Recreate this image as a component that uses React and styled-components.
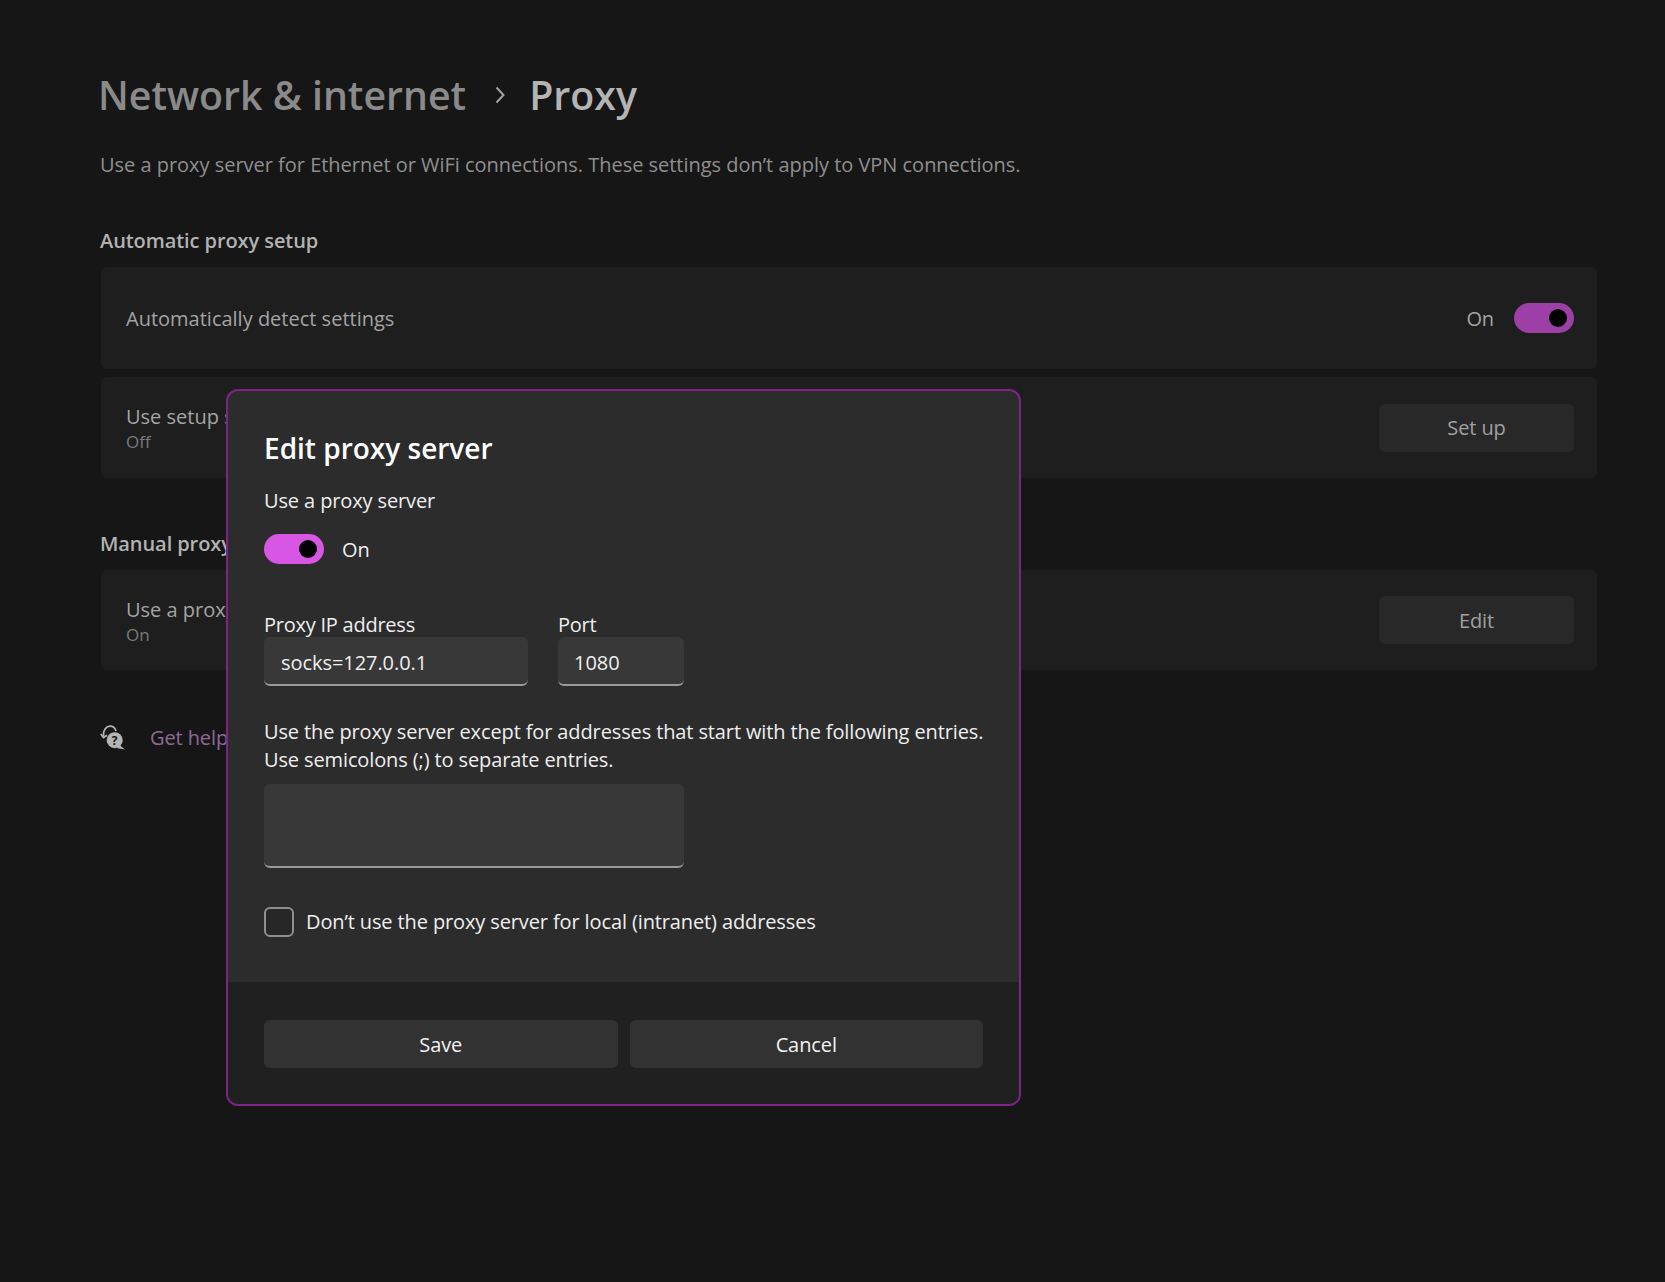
import React from "react";
import styled, { createGlobalStyle } from "styled-components";

const Global = createGlobalStyle`
  html, body { margin: 0; padding: 0; background: #161616; }
  body { font-family: "Open Sans", "Noto Sans", sans-serif; }
  * { box-sizing: border-box; }
`;

const Page = styled.div`
  position: relative;
  width: 1665px;
  height: 1282px;
  overflow: hidden;
  background: #161616;
  padding: 67px 68px 0 100px;
`;

const Breadcrumb = styled.div`
  display: flex;
  align-items: center;
  height: 56px;
  margin-left: -2px;
  font-size: 39.3px;
  font-weight: 600;
`;

const Crumb = styled.span`
  color: ${(p) => (p.$current ? "#b4b4b4" : "#8a8a8a")};
`;

const Sep = styled.svg`
  width: 14px;
  height: 20px;
  margin: 0 22px 0 27px;
  color: #a3a3a3;
`;

const Subtitle = styled.p`
  margin: 28px 0 0;
  font-size: 20px;
  line-height: 28px;
  letter-spacing: -0.02px;
  color: #8f8f8f;
`;

const SectionTitle = styled.h2`
  margin: ${(p) => p.$top}px 0 ${(p) => p.$bottom}px;
  font-size: 20px;
  line-height: 28px;
  font-weight: 600;
  letter-spacing: -0.08px;
  color: #b2b2b2;
`;

const Cards = styled.div`
  display: flex;
  flex-direction: column;
  gap: 8px;
  margin-left: 1px;
`;

const Card = styled.div`
  display: flex;
  align-items: center;
  justify-content: space-between;
  height: ${(p) => p.$h}px;
  padding: 0 23px 0 25px;
  background: #1e1e1e;
  border-radius: 6px;
`;

const CardText = styled.div`
  display: flex;
  flex-direction: column;
  padding-top: 2px;
`;

const CardTitle = styled.div`
  font-size: 20px;
  line-height: 26px;
  color: #a4a4a4;
`;

const CardSub = styled.div`
  font-size: 17px;
  line-height: 23px;
  color: #7a7a7a;
`;

const ToggleRow = styled.div`
  display: flex;
  align-items: center;
  gap: 20px;
`;

const OnLabel = styled.span`
  font-size: 20px;
  letter-spacing: -0.1px;
  color: ${(p) => p.$color};
`;

const Toggle = styled.div`
  display: flex;
  align-items: center;
  justify-content: flex-end;
  width: 60px;
  height: 30px;
  padding-right: 7px;
  border-radius: 15px;
  background: ${(p) => p.$color};
`;

const Knob = styled.div`
  width: 18px;
  height: 18px;
  border-radius: 50%;
  background: #000;
`;

const CardButton = styled.div`
  display: flex;
  align-items: center;
  justify-content: center;
  width: 195px;
  height: 48px;
  background: #282828;
  border-radius: 6px;
  font-size: 20px;
  letter-spacing: -0.1px;
  color: #a0a0a0;
`;

const Help = styled.div`
  display: flex;
  align-items: center;
  gap: 24px;
  margin-top: 54px;
`;

const HelpLink = styled.span`
  font-size: 20px;
  letter-spacing: -0.1px;
  color: #8f6a94;
`;

const Modal = styled.div`
  position: absolute;
  left: 226px;
  top: 389px;
  width: 795px;
  height: 717px;
  display: flex;
  flex-direction: column;
  background: #2c2c2c;
  border: 2px solid #7f2389;
  border-radius: 12px;
  overflow: hidden;
`;

const ModalBody = styled.div`
  flex: 1;
  padding: 38px 36px 0;
`;

const ModalTitle = styled.h1`
  margin: 0;
  font-size: 28px;
  line-height: 38px;
  font-weight: 600;
  color: #fff;
`;

const Text = styled.div`
  font-size: 20px;
  line-height: 28px;
  letter-spacing: -0.12px;
  white-space: nowrap;
  color: #efefef;
`;

const Spaced = styled(Text)`
  margin-top: ${(p) => p.$top}px;
`;

const FieldLabel = styled(Text)`
  height: 26px;
  padding-top: 2px;
  line-height: 24px;
  letter-spacing: -0.24px;
`;

const ModalToggleRow = styled.div`
  display: flex;
  align-items: center;
  gap: 18px;
  margin-top: 19px;
`;

const Fields = styled.div`
  display: flex;
  gap: 30px;
  margin-top: 47px;
`;

const Field = styled.div`
  display: flex;
  flex-direction: column;
  width: ${(p) => p.$w}px;
`;

const Input = styled.div`
  display: flex;
  align-items: center;
  height: 49px;
  padding: 3px 0 0 ${(p) => p.$pad}px;
  background: #383838;
  border-radius: 6px;
  border-bottom: 2px solid #9a9a9a;
  font-size: 20px;
  letter-spacing: -0.06px;
  color: #efefef;
`;

const TextArea = styled.div`
  width: 420px;
  height: 84px;
  margin-top: 10px;
  background: #383838;
  border-radius: 6px;
  border-bottom: 2px solid #9a9a9a;
`;

const CheckRow = styled.div`
  display: flex;
  align-items: center;
  gap: 12px;
  margin-top: 39px;
`;

const Checkbox = styled.div`
  width: 30px;
  height: 30px;
  border: 2px solid #8f8f8f;
  border-radius: 6px;
  background: #272727;
`;

const Footer = styled.div`
  display: flex;
  gap: 12px;
  height: 122px;
  padding: 38px 36px 0;
  background: #202020;
`;

const FooterButton = styled.div`
  flex: 1;
  display: flex;
  align-items: center;
  justify-content: center;
  height: 48px;
  background: #323232;
  border-radius: 6px;
  font-size: 20px;
  letter-spacing: -0.1px;
  color: #f2f2f2;
`;

const HelpIcon = () => (
  <svg width="26" height="26" viewBox="0 0 26 26" fill="none">
    <path d="M3.5 11 C2.5 5.5 6.5 1.2 10 1.2 C13 1.2 15 3 16 6" stroke="#b4b4b4" strokeWidth="1.7" />
    <path d="M0.8 9 L3.5 12.5 L7 10.3" stroke="#b4b4b4" strokeWidth="1.7" />
    <circle cx="14.7" cy="15.2" r="8" fill="#b4b4b4" />
    <path d="M19.5 20 L25 24.5 L16.5 23 Z" fill="#b4b4b4" />
    <text x="14.7" y="19.5" textAnchor="middle" fontSize="12" fontWeight="700" fontFamily="Open Sans" fill="#161616">?</text>
  </svg>
);

export default function App() {
  return (
    <Page>
      <Global />
      <Breadcrumb>
        <Crumb>Network &amp; internet</Crumb>
        <Sep viewBox="0 0 14 20" fill="none">
          <path d="M3.5 2.5 L10.5 10 L3.5 17.5" stroke="currentColor" strokeWidth="2" />
        </Sep>
        <Crumb $current>Proxy</Crumb>
      </Breadcrumb>
      <Subtitle>Use a proxy server for Ethernet or WiFi connections. These settings don’t apply to VPN connections.</Subtitle>

      <SectionTitle $top={48} $bottom={12}>Automatic proxy setup</SectionTitle>
      <Cards>
        <Card $h={102}>
          <CardText>
            <CardTitle>Automatically detect settings</CardTitle>
          </CardText>
          <ToggleRow>
            <OnLabel $color="#a4a4a4">On</OnLabel>
            <Toggle $color="#9c3fa6"><Knob /></Toggle>
          </ToggleRow>
        </Card>
        <Card $h={101}>
          <CardText>
            <CardTitle>Use setup script</CardTitle>
            <CardSub>Off</CardSub>
          </CardText>
          <CardButton>Set up</CardButton>
        </Card>
      </Cards>

      <SectionTitle $top={52} $bottom={12}>Manual proxy setup</SectionTitle>
      <Cards>
        <Card $h={100}>
          <CardText>
            <CardTitle>Use a proxy server</CardTitle>
            <CardSub>On</CardSub>
          </CardText>
          <CardButton>Edit</CardButton>
        </Card>
      </Cards>

      <Help>
        <HelpIcon />
        <HelpLink>Get help</HelpLink>
      </Help>

      <Modal>
        <ModalBody>
          <ModalTitle>Edit proxy server</ModalTitle>
          <Spaced $top={20}>Use a proxy server</Spaced>
          <ModalToggleRow>
            <Toggle $color="#d757e4"><Knob /></Toggle>
            <OnLabel $color="#efefef">On</OnLabel>
          </ModalToggleRow>
          <Fields>
            <Field $w={264}>
              <FieldLabel>Proxy IP address</FieldLabel>
              <Input $pad={17}>socks=127.0.0.1</Input>
            </Field>
            <Field $w={126}>
              <FieldLabel>Port</FieldLabel>
              <Input $pad={16}>1080</Input>
            </Field>
          </Fields>
          <Spaced $top={32}>
            Use the proxy server except for addresses that start with the following entries.
            <br />
            Use semicolons (;) to separate entries.
          </Spaced>
          <TextArea />
          <CheckRow>
            <Checkbox />
            <Text>Don’t use the proxy server for local (intranet) addresses</Text>
          </CheckRow>
        </ModalBody>
        <Footer>
          <FooterButton>Save</FooterButton>
          <FooterButton>Cancel</FooterButton>
        </Footer>
      </Modal>
    </Page>
  );
}
